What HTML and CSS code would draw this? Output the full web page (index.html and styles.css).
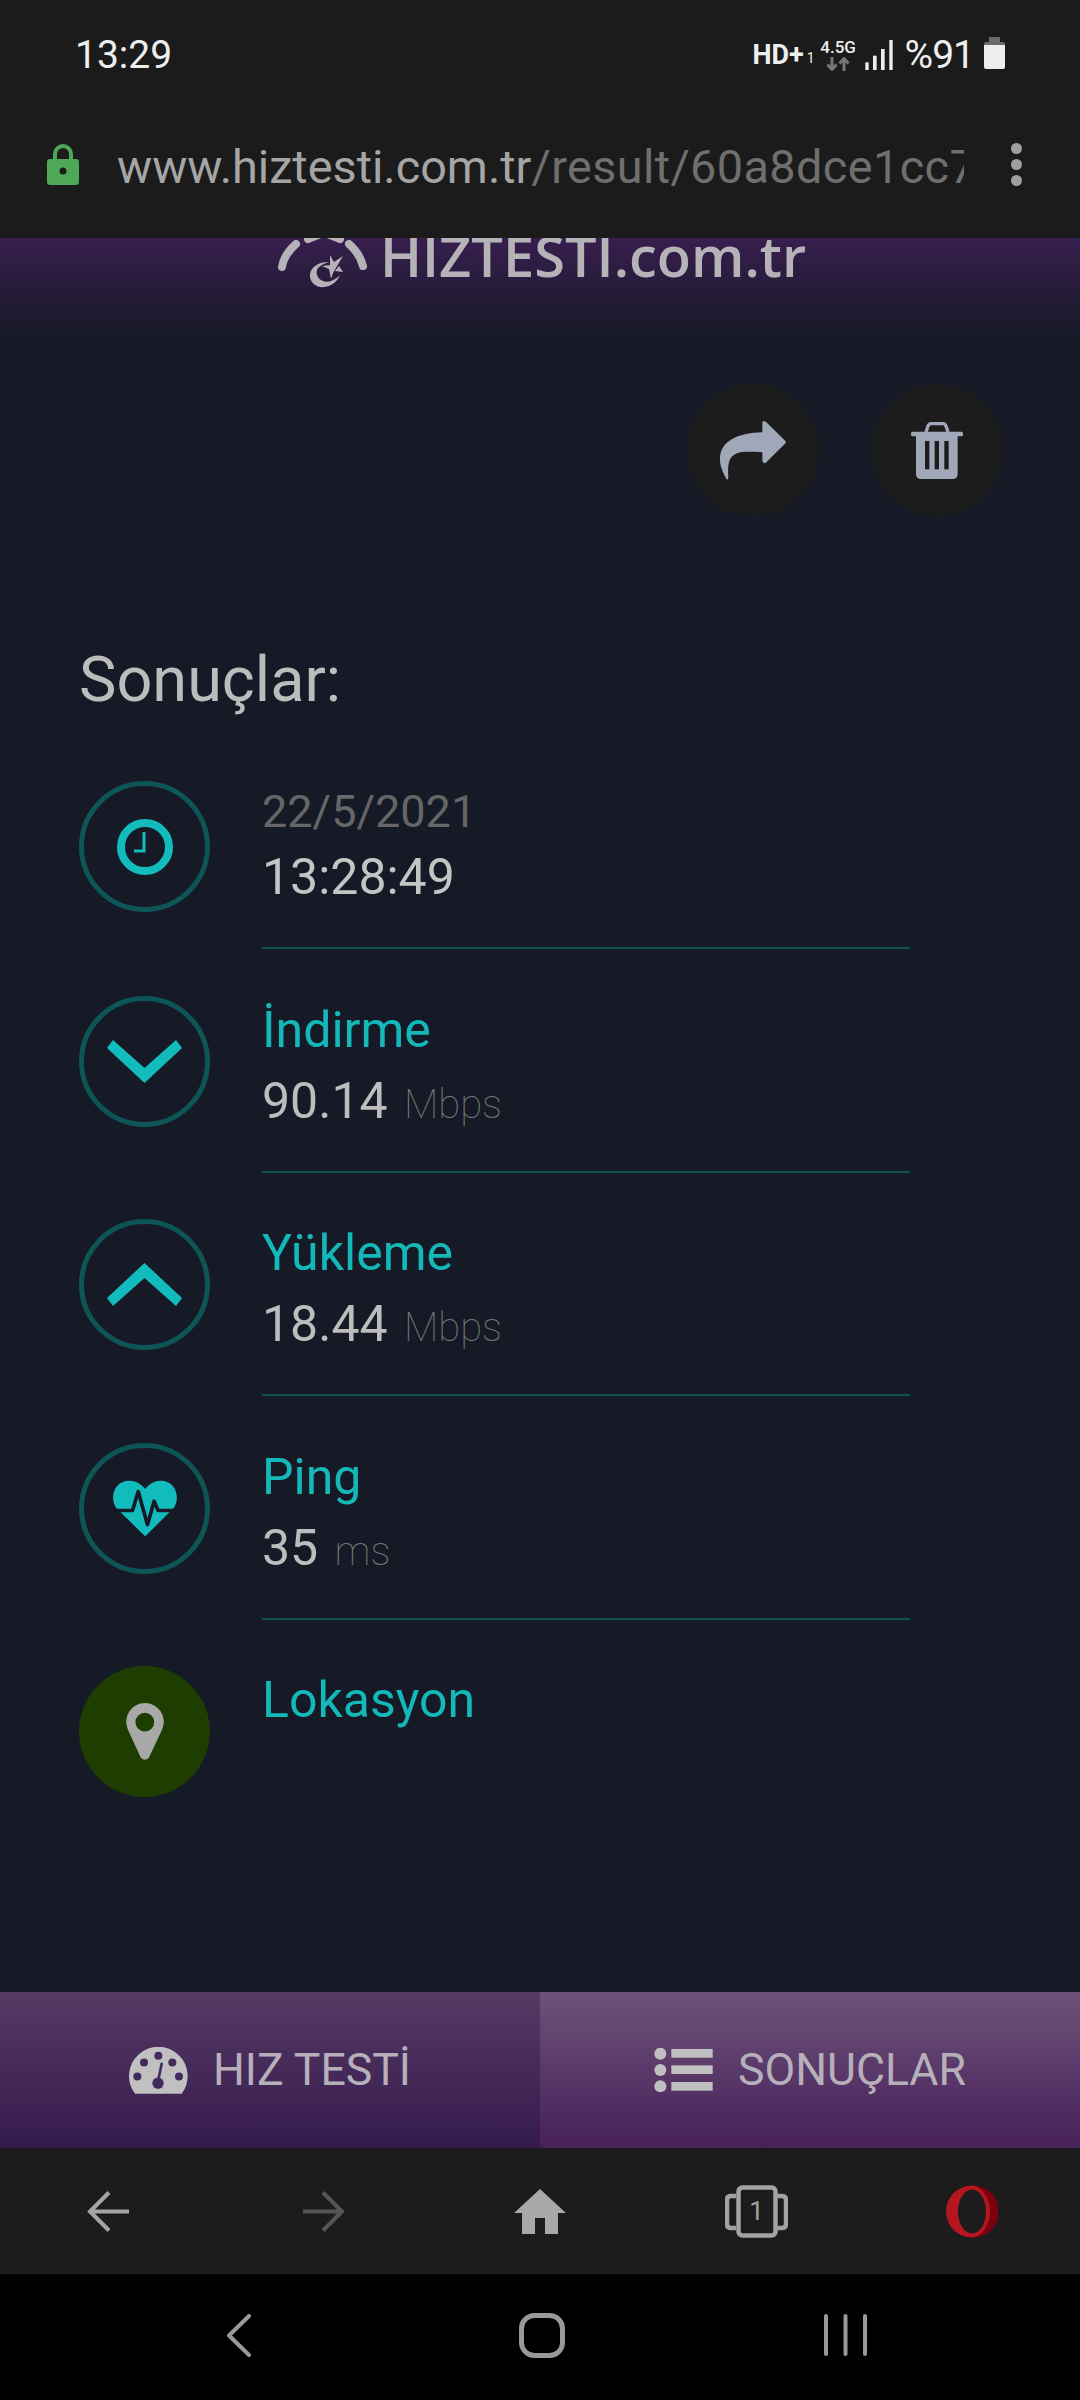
FILE: index.html
```html
<!DOCTYPE html>
<html lang="tr">
<head>
    <meta charset="UTF-8">
    <meta name="viewport" content="width=device-width, initial-scale=1.0">
    <title>Hiz Testi Sonuçlar</title>
    <link rel="stylesheet" href="styles.css">
</head>
<body>
    <div class="phone">
        <div class="topbar">
            <div class="status">
                <span class="clock">13:29</span>
                <div class="status-right">
                    <span class="hd">HD+</span>
                    <span class="sim">1</span>
                    <div class="net">
                        <span class="net-label">4.5G</span>
                        <svg width="24" height="14" viewBox="0 0 24 14">
                            <path d="M6 0v11M1.5 7.5L6 12.5l4.500-5M18 14V3M13.500 6.500L18 1.500l4.500 5" fill="none" stroke="#777" stroke-width="3"/>
                        </svg>
                    </div>
                    <svg class="signal" width="28" height="30" viewBox="435 58 82 90">
                        <rect x="435" y="125" width="10" height="23" fill="#eee"/>
                        <rect x="458" y="105" width="11" height="43" fill="#eee"/>
                        <rect x="482" y="85" width="11" height="63" fill="#eee"/>
                        <rect x="507" y="58" width="10" height="90" fill="#eee"/>
                    </svg>
                    <span class="battery-text">%91</span>
                    <svg class="battery" width="21" height="32" viewBox="0 0 21 32">
                        <rect x="5" y="0" width="11" height="6" fill="#6a6a6a"/>
                        <path d="M0 7a2 2 0 0 1 2-2h17a2 2 0 0 1 2 2v3H0z" fill="#6a6a6a"/>
                        <path d="M0 8h21v22a2 2 0 0 1-2 2H2a2 2 0 0 1-2-2z" fill="#eee"/>
                    </svg>
                </div>
            </div>
            <div class="urlbar">
                <svg class="lock" width="32" height="41" viewBox="0 0 32 41">
                    <path d="M8 17V10a8 8 0 0 1 16 0v7" fill="none" stroke="#4fa858" stroke-width="4"/>
                    <rect x="0" y="15" width="32" height="26" rx="3" fill="#4fa858"/>
                    <circle cx="16" cy="27" r="3.500" fill="#1b1b1b"/>
                </svg>
                <div class="url"><span class="domain">www.hiztesti.com.tr</span>/result/60a8dce1cc7</div>
                <div class="dots"><i></i><i></i><i></i></div>
            </div>
        </div>

        <div class="brand">
            <svg class="brand-icon" width="91" height="50" viewBox="0 0 91 50">
                <path d="M5 29C6 22 10 14 19 6M31 1L41 -3M53 -3L63 1M72 6C80 13 84 20 86 28" fill="none" stroke="#b5b3b8" stroke-width="8" stroke-linecap="round"/>
                <path d="M52 24C38 24 32 32 33 39C34 46 41 50 47 49C55 48 60 44 63 37C58 42 52 45 46 43C40 41 38 34 41 30C44 27 48 25 52 24Z" fill="#b5b3b8"/>
                <path d="M66 18L56 35L54 41L52 31L45 28L53 27L53 17L57 24Z" fill="#b5b3b8"/>
                <path d="M62 28L66 34L58 33Z" fill="#b5b3b8"/>
            </svg>
            <span class="brand-name">HIZTESTI.com.tr</span>
        </div>

        <div class="main">
            <div class="actions">
                <div class="action">
                    <svg width="66" height="59" viewBox="183 145 198 176">
                        <path d="M310 152Q310 140 322 148L378 203Q383 208 378 213L322 268Q312 276 310 262V238C260 236 225 232 212 262C205 280 208 305 208 315Q206 324 202 318C190 295 183 280 183 258C183 205 235 180 310 178Z" fill="#a0a7b8"/>
                    </svg>
                </div>
                <div class="action">
                    <svg width="52" height="57" viewBox="755 150 156 171">
                        <path d="M800 180L806 162Q809 155 816 155H850Q857 155 860 162L866 180" fill="none" stroke="#a0a7b8" stroke-width="10"/>
                        <rect x="755" y="179" width="156" height="14" rx="5" fill="#a0a7b8"/>
                        <path d="M770 190H895V305Q895 321 879 321H786Q770 321 770 305Z" fill="#a0a7b8"/>
                        <rect x="797" y="207" width="13" height="85" fill="#1c1c1c"/>
                        <rect x="826" y="207" width="13" height="85" fill="#1c1c1c"/>
                        <rect x="855" y="207" width="13" height="85" fill="#1c1c1c"/>
                    </svg>
                </div>
            </div>

            <h1 class="title">Sonuçlar:</h1>

            <div class="row row-date">
                <div class="badge">
                    <svg width="56" height="56" viewBox="0 0 56 56">
                        <circle cx="28" cy="28" r="24" fill="none" stroke="#13bcbc" stroke-width="8"/>
                        <path d="M27 13V32H17" fill="none" stroke="#13bcbc" stroke-width="3"/>
                    </svg>
                </div>
                <div class="info">
                    <div class="date">22/5/2021</div>
                    <div class="time">13:28:49</div>
                </div>
            </div>

            <div class="row">
                <div class="badge">
                    <svg width="75" height="43" viewBox="0 0 75 43">
                        <path d="M0 8L6 0L37.500 28L69 0L75 8L37.500 43Z" fill="#13bcbc"/>
                    </svg>
                </div>
                <div class="info">
                    <div class="label">İndirme</div>
                    <div class="value">90.14 <span class="unit">Mbps</span></div>
                </div>
            </div>

            <div class="row">
                <div class="badge">
                    <svg width="75" height="43" viewBox="0 0 75 43">
                        <path d="M0 35L6 43L37.500 15L69 43L75 35L37.500 0Z" fill="#13bcbc"/>
                    </svg>
                </div>
                <div class="info">
                    <div class="label">Yükleme</div>
                    <div class="value">18.44 <span class="unit">Mbps</span></div>
                </div>
            </div>

            <div class="row">
                <div class="badge">
                    <svg width="68" height="58" viewBox="150 145 205 175">
                        <path d="M253 318L165 232C145 200 160 150 205 150C230 150 245 165 253 175C261 165 276 150 300 150C345 150 360 200 340 232Z" fill="#13bcbc"/>
                        <path d="M150 240H215L232 183L260 283L280 212L292 240H355" fill="none" stroke="#161a26" stroke-width="11" stroke-linejoin="round"/>
                    </svg>
                </div>
                <div class="info">
                    <div class="label">Ping</div>
                    <div class="value">35 <span class="unit">ms</span></div>
                </div>
            </div>

            <div class="row row-last">
                <div class="badge badge-green">
                    <svg width="38" height="57" viewBox="197 820 113 170">
                        <path fill-rule="evenodd" d="M253 820A56 56 0 0 1 305 898L265 983Q253 995 241 983L202 898A56 56 0 0 1 253 820ZM253 849A28 28 0 1 0 253 905A28 28 0 1 0 253 849Z" fill="#a8a8a8"/>
                    </svg>
                </div>
                <div class="info">
                    <div class="label">Lokasyon</div>
                </div>
            </div>
        </div>

        <div class="tabs">
            <div class="tab">
                <svg width="59" height="47" viewBox="90 72 177 140">
                    <path d="M108 212A88 88 0 1 1 248 212Z" fill="#c0c0c0"/>
                    <circle cx="115" cy="160" r="12" fill="#432a5c"/>
                    <circle cx="135" cy="118" r="12" fill="#432a5c"/>
                    <circle cx="178" cy="98" r="12" fill="#432a5c"/>
                    <circle cx="220" cy="118" r="12" fill="#432a5c"/>
                    <circle cx="240" cy="160" r="12" fill="#432a5c"/>
                    <circle cx="177" cy="180" r="17" fill="#432a5c"/>
                    <path d="M177 175L188 122" stroke="#432a5c" stroke-width="8" stroke-linecap="round"/>
                </svg>
                <span>HIZ TESTİ</span>
            </div>
            <div class="tab tab-active">
                <svg width="59" height="45" viewBox="48 70 177 135">
                    <circle cx="67" cy="87" r="18" fill="#c0c0c0"/>
                    <circle cx="67" cy="136" r="18" fill="#c0c0c0"/>
                    <circle cx="67" cy="185" r="18" fill="#c0c0c0"/>
                    <rect x="100" y="73" width="124" height="26" fill="#c0c0c0"/>
                    <rect x="100" y="122" width="124" height="26" fill="#c0c0c0"/>
                    <rect x="100" y="172" width="124" height="26" fill="#c0c0c0"/>
                </svg>
                <span>SONUÇLAR</span>
            </div>
        </div>

        <div class="browserbar">
            <div class="bar-item">
                <svg width="42" height="41" viewBox="0 0 42 41">
                    <path d="M42 20.500H3M22 1.500L3 20.500L22 39.500" fill="none" stroke="#a5a5a5" stroke-width="4"/>
                </svg>
            </div>
            <div class="bar-item">
                <svg width="42" height="41" viewBox="0 0 42 41">
                    <path d="M0 20.500H39M20 1.500L39 20.500L20 39.500" fill="none" stroke="#555" stroke-width="4"/>
                </svg>
            </div>
            <div class="bar-item">
                <svg width="52" height="45" viewBox="0 0 52 45">
                    <path d="M0 24L26 0L52 24H44V45H31V29H21V45H8V24Z" fill="#a8a8a8"/>
                </svg>
            </div>
            <div class="bar-item">
                <svg width="63" height="53" viewBox="0 0 63 53">
                    <rect x="13.500" y="2.500" width="37" height="48" rx="4" fill="none" stroke="#a3a3a3" stroke-width="4.500"/>
                    <path d="M11 11H6Q2 11 2 15V39Q2 43 6 43H11M52 11H57Q61 11 61 15V39Q61 43 57 43H52" fill="none" stroke="#a3a3a3" stroke-width="4.500"/>
                    <text x="31.500" y="35" text-anchor="middle" class="tab-count">1</text>
                </svg>
            </div>
            <div class="bar-item">
                <svg width="52" height="53" viewBox="0 0 52 53">
                    <circle cx="26" cy="26.500" r="26" fill="#b5161f"/>
                    <path d="M27 0.500A26 26 0 0 1 27 52.500C38 50 44 38 44 26.500C44 15 38 3 27 0.500Z" fill="#7c0010"/>
                    <ellipse cx="26" cy="26.500" rx="14" ry="22" fill="#1c1c1c"/>
                </svg>
            </div>
        </div>

        <div class="navbar">
            <svg width="25" height="43" viewBox="0 0 25 43">
                <path d="M23 2L3 21.500L23 41" fill="none" stroke="#999" stroke-width="4" stroke-linecap="round" stroke-linejoin="round"/>
            </svg>
            <svg class="nav-home" width="46" height="45" viewBox="0 0 46 45">
                <rect x="2.500" y="2.500" width="41" height="40" rx="13" fill="none" stroke="#999" stroke-width="5"/>
            </svg>
            <svg width="43" height="42" viewBox="0 0 43 42">
                <path d="M2 2V40M21.500 2V40M41 2V40" fill="none" stroke="#999" stroke-width="4" stroke-linecap="round"/>
            </svg>
        </div>
    </div>
</body>
</html>
```

FILE: styles.css
```css
* {
    box-sizing: border-box;
}
body {
    margin: 0;
    font-family: Roboto, "Liberation Sans", sans-serif;
    background-color: #161a26;
}
.phone {
    width: 1080px;
    height: 2400px;
    display: flex;
    flex-direction: column;
    overflow: hidden;
}

/* status bar + address bar */
.topbar {
    height: 238px;
    flex: none;
    background-color: #1b1b1b;
}
.status {
    height: 110px;
    padding: 0 75px 0 75px;
    display: flex;
    align-items: center;
    justify-content: space-between;
    color: #eee;
}
.clock {
    font-size: 39px;
}
.status-right {
    display: flex;
    align-items: center;
}
.hd {
    font-size: 27px;
    font-weight: 700;
}
.sim {
    font-size: 14px;
    margin: 6px 7px 0 3px;
}
.net {
    width: 33px;
    display: flex;
    flex-direction: column;
    align-items: center;
    gap: 3px;
}
.net-label {
    font-size: 17px;
    line-height: 14px;
    font-weight: 500;
}
.signal {
    margin-left: 10px;
}
.battery-text {
    font-size: 39px;
    letter-spacing: -1px;
    margin-left: 12px;
}
.battery {
    margin: -4px 0 0 10px;
}
.urlbar {
    height: 108px;
    padding: 0 0 0 47px;
    display: flex;
    align-items: center;
}
.url {
    width: 847px;
    margin: 6px 0 0 38px;
    font-size: 46.800px;
    letter-spacing: 0.400px;
    white-space: nowrap;
    overflow: hidden;
    color: #6f6f6f;
}
.domain {
    color: #a5a5a5;
    letter-spacing: 0;
}
.dots {
    margin-left: 47px;
    display: flex;
    flex-direction: column;
    gap: 5px;
}
.dots i {
    display: block;
    width: 11px;
    height: 11px;
    border-radius: 50%;
    background-color: #a0a0a0;
}

/* page header */
.brand {
    height: 102px;
    flex: none;
    padding-left: 3px;
    display: flex;
    justify-content: center;
    align-items: flex-start;
    gap: 12px;
    overflow: hidden;
    background: linear-gradient(#371e4e, #161a26);
}
.brand-icon {
    flex: none;
}
.brand-name {
    margin-top: -17px;
    font-family: "Open Sans", sans-serif;
    font-size: 56px;
    line-height: 68px;
    font-weight: 600;
    color: #b5b3b8;
}

.main {
    flex: 1;
    padding: 44px 77px 0 79px;
}
.actions {
    display: flex;
    justify-content: flex-end;
    gap: 52px;
}
.action {
    width: 132px;
    height: 132px;
    border-radius: 50%;
    display: flex;
    align-items: center;
    justify-content: center;
    background-color: #1c1c1c;
}
.title {
    margin: 129px 0 66px;
    font-size: 63px;
    line-height: 70px;
    font-weight: 400;
    color: #bcbcbc;
}

/* result rows */
.row {
    display: flex;
    gap: 52px;
    margin-bottom: 46.400px;
}
.badge {
    width: 131px;
    height: 131px;
    flex: none;
    border: 5px solid #0d5556;
    border-radius: 50%;
    display: flex;
    align-items: center;
    justify-content: center;
}
.badge-green {
    border: none;
    background-color: #1e3d00;
}
.info {
    width: 648px;
    padding-bottom: 33px;
    border-bottom: 2px solid #0f4f50;
}
.row-date {
    margin-bottom: 47px;
}
.row-date .info {
    padding-bottom: 36px;
}
.row-last .info {
    border-bottom: none;
}
.date {
    font-size: 45px;
    line-height: 62px;
    color: #666;
}
.time {
    font-size: 50px;
    line-height: 68px;
    color: #c4c4c4;
}
.label {
    font-size: 50px;
    line-height: 68px;
    color: #14b8b8;
}
.value {
    font-size: 50px;
    line-height: 74px;
    color: #bdbdbd;
}
.unit {
    margin-left: 4px;
    font-size: 40px;
    line-height: 1;
    font-weight: 100;
    color: #777;
}

/* bottom tabs */
.tabs {
    height: 156px;
    flex: none;
    display: flex;
}
.tab {
    width: 540px;
    display: flex;
    align-items: center;
    justify-content: center;
    gap: 25px;
    font-size: 44.600px;
    color: #b6b0bb;
    background: linear-gradient(#553a65, #351a4d);
}
.tab-active {
    background: linear-gradient(#6d5279, #47205a);
}

/* browser toolbar */
.browserbar {
    height: 126px;
    flex: none;
    display: grid;
    grid-template-columns: repeat(5, 1fr);
    background-color: #1c1c1c;
}
.bar-item {
    display: flex;
    align-items: center;
    justify-content: center;
}
.tab-count {
    font-family: Roboto, sans-serif;
    font-size: 26px;
    fill: #a3a3a3;
}

/* android nav */
.navbar {
    height: 126px;
    flex: none;
    padding: 0 213px 4px 226px;
    display: flex;
    align-items: center;
    justify-content: space-between;
    background-color: #000;
}
.nav-home {
    margin-left: 9px;
}
```
